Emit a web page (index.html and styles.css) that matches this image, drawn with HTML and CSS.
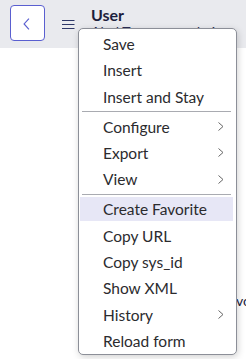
FILE: index.html
```html
<!DOCTYPE html>
<html>
<head>
<meta charset="utf-8">
<link rel="stylesheet" href="styles.css">
</head>
<body>
<header class="header">
  <button class="back" aria-label="Back">
    <svg width="34" height="34" viewBox="0 0 34 34"><polyline points="18.5,12.5 13.5,18 18.5,23.5" fill="none" stroke="#5a5fd0" stroke-width="1.2"/></svg>
  </button>
  <span class="burger">
    <svg width="13" height="10" viewBox="0 0 13 10"><path d="M0 1.5H12.5M0 5.5H12.5M0 9.5H12.5" stroke="#2e3868" stroke-width="1.2"/></svg>
  </span>
  <div class="title">
    <div class="title-main">User</div>
    <div class="title-sub">Abel Tuter - sysadmin</div>
  </div>
</header>
<main class="content">
  <div class="field-line">vo</div>
</main>

<nav class="menu">
  <div class="item">Save</div>
  <div class="item">Insert</div>
  <div class="item">Insert and Stay</div>
  <div class="divider"></div>
  <div class="item">Configure<span class="chev"><svg width="6" height="9" viewBox="0 0 6 9"><polyline points="0.5,0.5 5,4.5 0.5,8.5" fill="none" stroke="#666" stroke-width="1"/></svg></span></div>
  <div class="item">Export<span class="chev"><svg width="6" height="9" viewBox="0 0 6 9"><polyline points="0.5,0.5 5,4.5 0.5,8.5" fill="none" stroke="#666" stroke-width="1"/></svg></span></div>
  <div class="item">View<span class="chev"><svg width="6" height="9" viewBox="0 0 6 9"><polyline points="0.5,0.5 5,4.5 0.5,8.5" fill="none" stroke="#666" stroke-width="1"/></svg></span></div>
  <div class="divider"></div>
  <div class="item active">Create Favorite</div>
  <div class="item">Copy URL</div>
  <div class="item">Copy sys_id</div>
  <div class="item">Show XML</div>
  <div class="item">History<span class="chev"><svg width="6" height="9" viewBox="0 0 6 9"><polyline points="0.5,0.5 5,4.5 0.5,8.5" fill="none" stroke="#666" stroke-width="1"/></svg></span></div>
  <div class="item">Reload form</div>
</nav>
</body>
</html>
```

FILE: styles.css
```css
html, body {
  margin: 0;
  padding: 0;
  background: #ffffff;
  overflow: hidden;
  font-family: Lato, "Noto Sans", sans-serif;
}

.header {
  height: 48px;
  box-sizing: border-box;
  background: #e9eaee;
  display: flex;
  align-items: flex-start;
  padding: 5px 0 0 9.5px;
}

.back {
  width: 35px;
  height: 36px;
  box-sizing: border-box;
  border: 1px solid #5a5fd0;
  border-radius: 4px;
  background: #ffffff;
  padding: 0;
  display: flex;
  align-items: center;
  justify-content: center;
}

.burger {
  margin: 13.5px 0 0 17.5px;
  display: flex;
  width: 13px;
  height: 10px;
}

.title {
  margin: 1px 0 0 16px;
  white-space: nowrap;
}

.title-main {
  font-size: 16px;
  line-height: 18px;
  font-weight: 700;
  color: #1d1f3d;
}

.title-sub {
  font-size: 14px;
  line-height: 14px;
  margin-top: 1px;
  color: #2a2d55;
}

.content {
  padding-top: 245px;
}

.field-line {
  padding-left: 236px;
  font-size: 14px;
  line-height: 16px;
  color: #1c2140;
  white-space: nowrap;
}

.menu {
  position: absolute;
  z-index: 2;
  left: 78px;
  top: 28px;
  width: 159px;
  box-sizing: border-box;
  background: #ffffff;
  border: 1px solid #8c8f98;
  border-radius: 5px;
  box-shadow: 1px 2px 7px rgba(0, 0, 0, 0.18);
  padding: 3px 3px 1px 1px;
  display: flex;
  flex-direction: column;
  gap: 2.4px;
}

.item {
  height: 24px;
  display: flex;
  align-items: center;
  justify-content: space-between;
  padding: 0 9px 0 23px;
  font-size: 15.5px;
  color: #2b2b2e;
  white-space: nowrap;
}

.item.active {
  background: #e7e7f6;
}

.chev {
  display: flex;
  width: 6px;
  height: 9px;
}

.divider {
  height: 1px;
  margin: 0 2px;
  background: #a9abb1;
}
```
